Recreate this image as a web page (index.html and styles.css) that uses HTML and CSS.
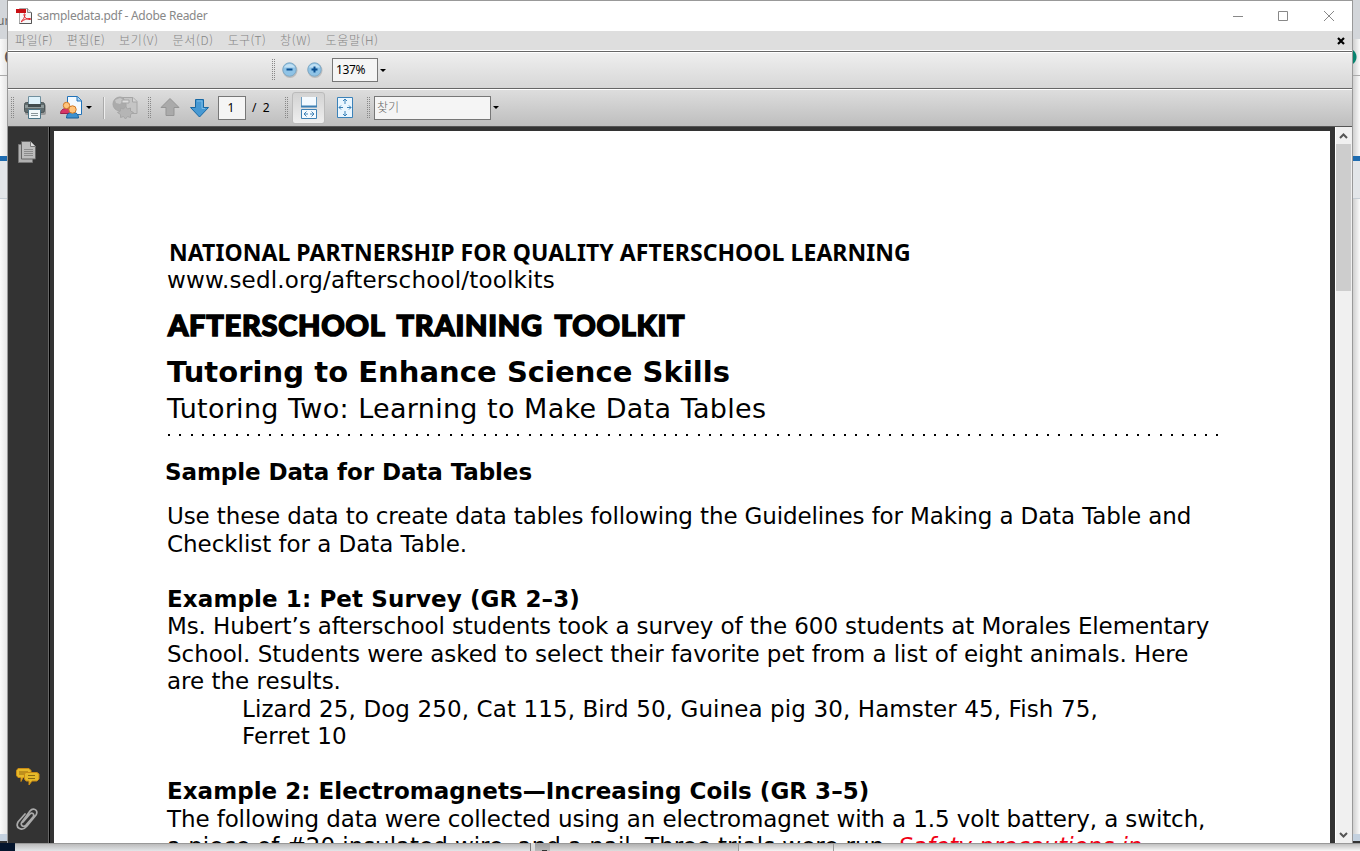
FILE: index.html
```html
<!DOCTYPE html>
<html lang="ko"><head><meta charset="utf-8"><title>sampledata.pdf - Adobe Reader</title>
<link rel="stylesheet" href="styles.css"></head><body>
<div class="backdrop left"><i class="tabs">ur</i><i class="address">C</i><i class="band"></i><i class="section"></i><i class="blank"></i><i class="status"></i></div>
<div class="window">
<header class="titlebar">
<svg class="logo" width="18" height="18" viewBox="0 0 18 18"><path d="M3.500 1.500h8l4 4v11h-12z" fill="#f7f7f7" stroke="#aaa"/><path d="M15.500 5.500v11h-12" fill="none" stroke="#555"/><path d="M11.500 1.500v4h4" fill="#ddd" stroke="#888"/><path d="M0 2h10v4H0z" fill="#c80f14"/><path d="M5 14.500c2-1 4-5 4-7 0-1-1-1-1 0 0 3 3 5 6 5 1 0 1-1 0-1-3 0-6 1-9 3.500" fill="none" stroke="#e02028"/></svg>
<span class="title">sampledata.pdf - Adobe Reader</span>
<svg class="controls" width="104" height="14" viewBox="0 0 104 14" fill="none" stroke="#888"><path d="M1 7.500h10M46.500 2.500h9v9h-9zM92 2l10 10M102 2L92 12"/></svg>
</header>
<nav class="menu"><span>파일(F)</span><span>편집(E)</span><span class="wide">보기(V)</span><span class="wide">문서(D)</span><span>도구(T)</span><span class="wide">창(W)</span><span class="wide">도움말(H)</span><svg class="close" width="8" height="8" viewBox="0 0 8 8"><path d="M1 1l6 6M7 1L1 7" stroke="#000" stroke-width="2.200"/></svg></nav>
<div class="toolbar upper"><i class="grip"></i>
<svg class="zoomout" width="18" height="18" viewBox="0 0 18 18"><circle cx="9" cy="9.500" r="7.500" fill="#999" opacity=".5"/><circle cx="8.500" cy="8.500" r="6.700" fill="#8fc3e6" stroke="#7ea9c6"/><path d="M3 6.500a6 6 0 0 1 11 0z" fill="#c1e0f3"/><path d="M5.500 8.500h6" stroke="#0a4f90" stroke-width="2"/></svg>
<svg class="zoomin" width="18" height="18" viewBox="0 0 18 18"><circle cx="9" cy="9.500" r="7.500" fill="#999" opacity=".5"/><circle cx="8.500" cy="8.500" r="6.700" fill="#8fc3e6" stroke="#7ea9c6"/><path d="M3 6.500a6 6 0 0 1 11 0z" fill="#c1e0f3"/><path d="M5.500 8.500h6M8.500 5.500v6" stroke="#0a4f90" stroke-width="2"/></svg>
<span class="field percent">137%</span><i class="arrow"></i></div>
<div class="toolbar lower"><i class="grip"></i>
<svg class="print" width="24" height="26" viewBox="0 0 24 26"><rect x="2" y="9" width="21" height="11" rx="2" fill="#999"/><rect x="1.500" y="7.500" width="20" height="10" rx="2" fill="#606b6d" stroke="#4b5557"/><path d="M2 10h19v3H2z" fill="#8d9899"/><path d="M5.500 1.500h12v8h-12z" fill="#dff2fb" stroke="#71909f"/><path d="M5 9h13v3H5z" fill="#414b4e"/><path d="M5.500 14.500h12v9h-12z" fill="#f3f8fa" stroke="#4d7587"/><path d="M8 18.500h7M8 20.500h7" stroke="#8a9599"/></svg>
<svg class="collab" width="23" height="25" viewBox="0 0 23 25"><path d="M7.500 1.500h10l4 4v14h-14z" fill="#f3faff" stroke="#2272b8"/><path d="M17 1.500V6h4.500" fill="#a9d3f3" stroke="#2272b8"/><path d="M.5 18.500c0-3 2-5 6-5s5 2 5 5z" fill="#d73667" stroke="#9b234b"/><circle cx="6.500" cy="10.500" r="3.200" fill="#ffc47c" stroke="#cf7926"/><path d="M6.500 23c0-4 2-5.500 6-5.500s6 1.500 6 5.500z" fill="#3e91ce" stroke="#175f9a"/><circle cx="12.500" cy="14.500" r="3.700" fill="#ffc47c" stroke="#cf7926"/></svg><i class="arrow"></i><i class="rule"></i>
<svg class="share" width="27" height="25" viewBox="0 0 27 25" fill="#ababab" stroke="#a6a6a6"><circle cx="8" cy="9" r="7"/><path d="M3 5l5-2 4 2-4 4-4-1z" fill="#c6c6c6" stroke="none"/><path d="M11 2.500h10l4 4v12H14V9z" fill="#c5c5c5"/><path d="M10 5h7v3h-7z" fill="#dedede"/><path d="M20.500 2.500V7H25" fill="#d5d5d5"/><path d="M13.500 11.500l2 2.500 3-1v3l3 1.500-3 2v3l-3-1-2 2.500-2-2.500-3 1v-3l-3-2 3-1.500v-3l3 1z" fill="#b5b5b5"/></svg><i class="grip"></i>
<svg class="up" width="21" height="21" viewBox="0 0 21 21"><path d="M10 1.500l9 9h-5v8H6v-8H1z" fill="#aaa" stroke="#959595"/></svg>
<svg class="down" width="21" height="21" viewBox="0 0 21 21"><path d="M6.500 1.500h8v8h5l-9 9.500-9-9.500h5z" fill="#4799d3" stroke="#1768a4"/><path d="M8 3h5v7.500h3" fill="none" stroke="#7dbce7"/></svg>
<span class="field pageno">1</span><span class="pages">/&nbsp; 2</span><i class="grip"></i>
<span class="active"><svg width="18" height="24" viewBox="0 0 18 24" fill="#f4faff" stroke="#3d80b5"><path d="M1.500 1v9.500h15V1" stroke="#6b9dc2"/><path d="M1 10.500h16" stroke-width="2"/><path d="M1.500 13.500h15v9h-15z"/><path d="M4 18h4M10 18h4M6.500 15.500L4 18l2.500 2.500M11.500 15.500L14 18l-2.500 2.500" fill="none"/></svg></span>
<svg class="fitpage" width="18" height="23" viewBox="0 0 18 23" fill="#eaf6ff" stroke="#3b82b9"><path d="M1.500 1.500h15v20h-15z"/><path d="M9 3v5M7 5l2-2 2 2M9 20v-5M7 18l2 2 2-2M3 11.500h4M5 9.500l-2 2 2 2M15 11.500h-4M13 9.500l2 2-2 2" fill="none"/></svg><i class="grip"></i><span class="field search">찾기</span><i class="arrow"></i></div>
<main class="workspace"><aside>
<svg class="thumbs" width="20" height="24" viewBox="0 0 20 24" fill="#b0b0b0" stroke="#777"><path d="M1.500 4.500h14v18h-14z"/><path d="M4.500 1.500h9l5 5v12.500h-14z" fill="#bdbdbd" stroke="#666"/><path d="M13.500 1.500v5h5" fill="#ddd"/><path d="M7 9.500h9M7 11.500h9M7 13.500h9M7 15.500h9" stroke="#8c8c8c"/></svg>
<svg class="comments" width="24" height="20" viewBox="0 0 24 20" fill="#e5b92a" stroke="#c98a14"><path d="M2 1.500h11l2 2v5l-2 2H7l-2 4v-4H2l-1.500-2v-5z"/><path d="M3 5h9M3 7h6" stroke="#96660f"/><path d="M10 5.500h11l2 1.500v5l-2 2h-5l-3 4v-4h-3L8.500 12V7z"/><path d="M12 8.500h7M12 11.500h7" stroke="#8a6a10"/></svg>
<svg class="clip" width="23" height="25" viewBox="0 0 23 25" fill="none" stroke="#aaa" stroke-width="1.700" stroke-linecap="round"><path d="M7 15l7-8c2-2 5 0 3 3l-7 8c-3 3-6 0-4-3L14 4c3-4 9-1 6 4l-9 11c-5 6-12 2-9-4L9 7"/></svg></aside>
<article class="page"><div class="doc">
<p class="org">NATIONAL PARTNERSHIP FOR QUALITY AFTERSCHOOL LEARNING</p>
<p class="url">www.sedl.org/afterschool/toolkits</p>
<p class="kit">AFTERSCHOOL TRAINING TOOLKIT</p>
<h1>Tutoring to Enhance Science Skills</h1>
<p class="sub">Tutoring Two: Learning to Make Data Tables</p>
<div class="dots"></div>
<h2 class="sample">Sample Data for Data Tables</h2>
<p class="intro">Use these data to create data tables following the Guidelines for Making a Data Table and</p>
<p class="even">Checklist for a Data Table.</p>
<h2 class="gap pet">Example 1: Pet Survey (GR 2–3)</h2>
<p class="tight">Ms. Hubert’s afterschool students took a survey of the 600 students at Morales Elementary</p>
<p class="even">School. Students were asked to select their favorite pet from a list of eight animals. Here</p>
<p>are the results.</p>
<p class="indent">Lizard 25, Dog 250, Cat 115, Bird 50, Guinea pig 30, Hamster 45, Fish 75,</p>
<p class="indent">Ferret 10</p>
<h2 class="gap coils">Example 2: Electromagnets—Increasing Coils (GR 3–5)</h2>
<p class="tight">The following data were collected using an electromagnet with a 1.5 volt battery, a switch,</p>
<p class="trials">a piece of #20 insulated wire, and a nail. Three trials were run. <em>Safety precautions in</em></p>
</div></article>
<div class="scroll"><svg width="9" height="6" viewBox="0 0 9 6"><path d="M1 5l3.500-3.500L8 5" fill="none" stroke="#555" stroke-width="2"/></svg><i class="thumb"></i><svg class="downarrow" width="9" height="6" viewBox="0 0 9 6"><path d="M1 1l3.500 3.500L8 1" fill="none" stroke="#555" stroke-width="2"/></svg></div>
</main></div>
<div class="backdrop right"><i class="tabs"></i><i class="address"></i><i class="band"></i><i class="section"></i><i class="blank"></i><i class="status"></i></div>
<footer class="behind"><i class="navy"></i><i class="pane"></i><i class="icon"></i><i class="tab"></i><i class="tab2"></i><i class="rest"></i></footer>
</body></html>
```
FILE: styles.css
```css
*{box-sizing:border-box}
body{margin:0;width:1360px;height:851px;overflow:hidden;display:grid;grid-template:843px 8px/8px 1344px 8px;background:#fff;font-family:"Noto Sans","Noto Sans CJK KR",sans-serif;font-size:12px;color:#000}
i{font-style:normal;display:block}
svg{display:block;flex:none}
p,h1,h2{margin:0;white-space:pre}
.backdrop{display:flex;flex-direction:column;overflow:hidden}
.backdrop.left{border-right:1px solid #999;background:linear-gradient(90deg,#fafafa,#e6e6e6)}
.backdrop.right{border-left:1px solid #999;background:linear-gradient(90deg,#d0d0d0,#fafafa)}
.tabs{height:39px;background:#d3d6da;padding-top:13px;color:#666;line-height:16px;flex:none}
.left .tabs{text-indent:-3px}
.address{height:37px;border-bottom:1px solid #aaa;flex:none;font:20px/37px "Liberation Sans",sans-serif;color:#555;text-indent:4px}
.right .address{background:radial-gradient(circle at -5px 18px,#07836f 8px,transparent 9px)}
.band{height:85px;border-bottom:5px solid #1f6cb0;flex:none}
.section{height:38px;background:#e3e6e9;border-bottom:1px solid #c6ced5;flex:none}
.blank{flex:1}
.status{height:9px;background:#c4d1df;border-bottom:2px solid #333;flex:none}

.window{display:flex;flex-direction:column;background:#fff;border-top:1px solid #999;overflow:hidden;height:843px}
.titlebar{height:30px;flex:none;display:flex;align-items:center;padding-left:8px;color:#888}
.title{margin-left:3px;line-height:20px;letter-spacing:-.26px}
.controls{margin-left:auto;margin-right:16px}
.menu{height:19px;flex:none;background:#dedede;color:#858585;display:flex;align-items:center;padding:0 7px;gap:14px;font-family:"Noto Sans CJK KR",sans-serif;font-weight:300;line-height:16px;padding-bottom:2px;letter-spacing:.35px}
.menu .wide{letter-spacing:.67px}
.close{margin:2px 0 0 auto}

.toolbar{display:flex;align-items:center;flex:none;border-top:1px solid #666;box-shadow:inset 0 1px #fff}
.upper{height:37px;margin-top:1px;background:linear-gradient(#efefef,#d7d7d7);padding-left:264px}
.lower{height:38px;background:linear-gradient(#dedede,#bebebe);padding-left:3px}
.grip{width:3px;height:22px;flex:none;background:conic-gradient(transparent 75%,#888 0) 0 0/2px 2px}
.zoomout{margin:0 0 1px 6px}
.zoomin{margin:0 0 1px 7px}
.field{height:24px;border:1px solid #777;background:#f5f5f5;line-height:21px;flex:none}
.percent{width:46px;margin-left:8px;padding-left:3px;letter-spacing:-.4px}
.arrow{width:0;height:0;border:3px solid transparent;border-top-color:#000;border-bottom:0;margin-left:2px;flex:none}
.print{margin-left:9px}
.collab{margin-left:13px}
.lower .arrow{margin-left:3px}
.rule{width:2px;height:22px;background:#eee;margin-left:11px;border-left:1px solid #aaa;flex:none}
.share{margin:0 9px 0 7px}
.up{margin-left:9px}
.down{margin:2px 0 0 8px}
.pageno{width:28px;margin-left:8px;text-align:center;padding-right:2px}
.pages{margin-left:6px;width:33px}
.active{width:33px;height:32px;margin-left:4px;display:flex;align-items:center;justify-content:center;border:1px solid #bbb;border-radius:3px;background:linear-gradient(#d2d2d2,#efefef)}
.fitpage{margin:0 13px 0 11px}
.search{width:117px;margin-left:4px;padding-left:2px;color:#666;font-weight:300}
.lower .search+.arrow{margin-left:2px}

.workspace{height:717px;flex:none;display:flex;background:#333;border-top:1px solid #555}
aside{width:42px;height:716px;border-right:1px solid #000;box-shadow:inset -1px 0 #666;display:flex;flex-direction:column;padding:13px 0 0 8px;flex:none}
.thumbs{margin-left:1px}
.comments{margin-top:603px}
.clip{margin-top:20px}
.page{width:1276px;height:712px;margin:4px 5px 0 4px;background:#fff;overflow:hidden;flex:none}
.doc{padding:107.500px 0 0 113px;font-family:"DejaVu Sans",sans-serif;font-size:23px;line-height:27.500px}
.org{font-family:"Noto Sans",sans-serif;font-weight:700;margin-left:2px;letter-spacing:.055px}
.url{letter-spacing:.19px;margin-top:.5px}
.kit{font-family:Lato,sans-serif;font-weight:900;font-size:29px;line-height:36px;margin:12.500px 0 0 1px;letter-spacing:.75px;word-spacing:5px;-webkit-text-stroke:1.500px #000}
h1{font-size:29px;line-height:36px;margin-top:11px;letter-spacing:.05px}
.sub{font-size:27px;line-height:36px;letter-spacing:.28px;word-spacing:.5px;margin-top:1px}
.dots{width:1054px;height:2px;margin:7px 0 23px 1px;background:repeating-linear-gradient(90deg,#000 0 2px,transparent 2px 11.270px)}
h2{font-size:23px;line-height:27.500px}
.sample{margin-left:-2px;letter-spacing:-.086px}
.intro{margin-top:17px;letter-spacing:-.12px}
.tight{letter-spacing:-.108px}
.even{letter-spacing:-.04px}
.gap{margin-top:27.500px}
.pet{letter-spacing:.11px}
.coils{letter-spacing:.035px}
.trials{letter-spacing:-.045px}
.indent{margin-left:75px;letter-spacing:.105px}
em{color:#f00014}

.scroll{width:17px;background:#f0f0f0;display:flex;flex-direction:column;align-items:center;padding:6px 1px 0 0;border-left:1px solid #fff}
.thumb{width:15px;height:147px;background:#cdcdcd;margin-top:5px}
.downarrow{margin-top:auto;margin-bottom:5px}

.behind{grid-column:1/4;display:flex}
.behind i{height:8px;flex:none;background:linear-gradient(#999 1px,#bbb 1px,#e3e6e9)}
.behind .navy{width:15px;background:#04152d}
.behind .pane{width:516px;border-right:1px solid #777}
.behind .icon{width:19px;border-left:4px solid #ddd;background:linear-gradient(#333,#333) 7px 7px/5px 1px no-repeat,linear-gradient(#999,#bbb)}
.behind .tab{width:189px;border-right:1px solid #999;background:linear-gradient(#999 1px,#b0b0b0 1px,#ddd)}
.behind .tab2{width:95px;border-right:1px solid #999;background:linear-gradient(#999 1px,#c0c0c0 1px,#f5f5f5)}
.behind .rest{flex:1;background:linear-gradient(#999 1px,#c0c0c0 1px,#f8f8f8)}
```
